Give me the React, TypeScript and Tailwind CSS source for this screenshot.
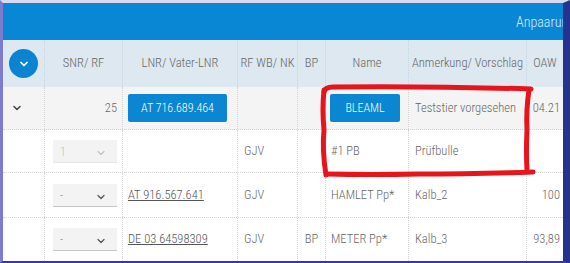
import React from "react";
import { ChevronDown } from "lucide-react";

const COLS = "grid grid-cols-[42px_78px_115px_60px_28px_83px_118px_36px]";
const font = {
  fontFamily: '"Roboto Condensed", "DejaVu Sans Condensed", sans-serif',
  fontStretch: "condensed" as const,
};

function Select({ value, disabled }: { value: string; disabled?: boolean }) {
  return (
    <div
      className={`relative w-[64px] h-[23px] bg-[#f3f3f3] border-b ${
        disabled ? "border-[#e6e6e6]" : "border-[#c4c4c4]"
      }`}
    >
      <span
        className={`absolute left-[7px] top-[3px] text-[12px] ${
          disabled ? "text-[#c0c0c0]" : "text-[#888]"
        }`}
      >
        {value}
      </span>
      <ChevronDown
        size={12}
        strokeWidth={2.5}
        className={`absolute right-[10px] bottom-[3px] ${disabled ? "text-[#c4c4c4]" : "text-[#555]"}`}
      />
    </div>
  );
}

function Cell({
  children,
  className = "",
  last,
}: {
  children?: React.ReactNode;
  className?: string;
  last?: boolean;
}) {
  return (
    <div
      className={`flex items-center h-full whitespace-nowrap ${
        last ? "" : "border-r border-dotted border-[#d4d4d4]"
      } ${className}`}
    >
      {children}
    </div>
  );
}

function Btn({ children, w }: { children: React.ReactNode; w: string }) {
  return (
    <div
      className={`${w} h-[28px] rounded-[2px] bg-[#0a86d3] text-white text-[12px] flex items-center justify-center`}
    >
      {children}
    </div>
  );
}

export default function App() {
  return (
    <div
      style={font}
      className="relative w-[570px] h-[263px] overflow-hidden bg-white font-light border-l-[3px] border-l-[#7b7bd0] border-t-[3px] border-t-[#d9d9ef] border-r-[7px] border-r-[#25338f] border-b-[2px] border-b-[#3434c0]"
    >
      <div className="h-[37px] bg-[#0a87d4] flex items-center pl-[513px] overflow-hidden whitespace-nowrap">
        <span className="text-[14px] text-[#d4ebfa] mt-[1px]">Anpaarungen</span>
      </div>

      <div className={`${COLS} h-[47px] bg-[#dde8f1] text-[12.5px] text-[#666] whitespace-nowrap`}>
        <div className="flex items-center justify-center border-r border-dotted border-[#c6d4df]">
          <div className="w-[29px] h-[29px] rounded-full bg-[#0a84d0] flex items-center justify-center">
            <ChevronDown size={12} strokeWidth={3.5} className="text-white" />
          </div>
        </div>
        <div className="flex items-center justify-center border-r border-dotted border-[#c6d4df]">SNR/ RF</div>
        <div className="flex items-center justify-center border-r border-dotted border-[#c6d4df]">LNR/ Vater-LNR</div>
        <div className="flex items-center justify-center border-r border-dotted border-[#c6d4df]">RF WB/ NK</div>
        <div className="flex items-center justify-center border-r border-dotted border-[#c6d4df]">BP</div>
        <div className="flex items-center justify-center border-r border-dotted border-[#c6d4df]">Name</div>
        <div className="flex items-center justify-center border-r border-dotted border-[#c6d4df]">Anmerkung/ Vorschlag</div>
        <div className="flex items-center justify-center">OAW</div>
      </div>

      <div className={`${COLS} h-[43px] bg-[#f4f4f4] text-[12.5px] text-[#666] border-b border-dotted border-[#d4d4d4]`}>
        <Cell className="pl-[8px]">
          <ChevronDown size={12} strokeWidth={3} className="text-[#444]" />
        </Cell>
        <Cell className="justify-end pr-[5px]">25</Cell>
        <Cell className="pl-[5px]">
          <Btn w="w-[99px]">AT 716.689.464</Btn>
        </Cell>
        <Cell />
        <Cell />
        <Cell className="pl-[4px]">
          <Btn w="w-[70px]">BLEAML</Btn>
        </Cell>
        <Cell className="pl-[6px]">Teststier vorgesehen</Cell>
        <Cell last className="justify-end pr-[3px]">04.21</Cell>
      </div>

      <div className={`${COLS} h-[43px] text-[12.5px] text-[#666] border-b border-dotted border-[#d4d4d4]`}>
        <Cell />
        <Cell className="pl-[8px] pt-[1px]">
          <Select value="1" disabled />
        </Cell>
        <Cell />
        <Cell className="pl-[6px]">GJV</Cell>
        <Cell />
        <Cell className="pl-[5px]">#1 PB</Cell>
        <Cell className="pl-[6px]">Prüfbulle</Cell>
        <Cell last />
      </div>

      <div className={`${COLS} h-[45px] text-[12.5px] text-[#666] border-b border-dotted border-[#d4d4d4]`}>
        <Cell />
        <Cell className="pl-[8px]">
          <Select value="-" />
        </Cell>
        <Cell className="pl-[5px]">
          <span className="underline text-[#555]">AT 916.567.641</span>
        </Cell>
        <Cell className="pl-[6px]">GJV</Cell>
        <Cell />
        <Cell className="pl-[5px]">HAMLET Pp*</Cell>
        <Cell className="pl-[6px]">Kalb_2</Cell>
        <Cell last className="justify-end pr-[3px]">100</Cell>
      </div>

      <div className={`${COLS} h-[43px] text-[12.5px] text-[#666]`}>
        <Cell />
        <Cell className="pl-[8px]">
          <Select value="-" />
        </Cell>
        <Cell className="pl-[5px]">
          <span className="underline text-[#555]">DE 03 64598309</span>
        </Cell>
        <Cell className="pl-[6px]">GJV</Cell>
        <Cell className="justify-center">BP</Cell>
        <Cell className="pl-[5px]">METER Pp*</Cell>
        <Cell className="pl-[6px]">Kalb_3</Cell>
        <Cell last className="justify-end pr-[3px]">93,89</Cell>
      </div>

      <svg
        className="absolute left-[-3px] top-[-3px] pointer-events-none"
        width="570"
        height="263"
        viewBox="0 0 570 263"
      >
        <g fill="none" stroke="#e8141c" strokeWidth="5" strokeLinecap="round" strokeLinejoin="round">
          <path d="M 324 92 Q 325 87 333 87 Q 430 86 531 89" />
          <path d="M 529 90 Q 526 110 527 130 Q 526 152 527 170" />
          <path d="M 533 172 Q 470 174 420 174 Q 370 175 327 174" />
          <path d="M 326 175 Q 322 150 324 130 Q 322 110 324 90" />
        </g>
      </svg>
    </div>
  );
}
